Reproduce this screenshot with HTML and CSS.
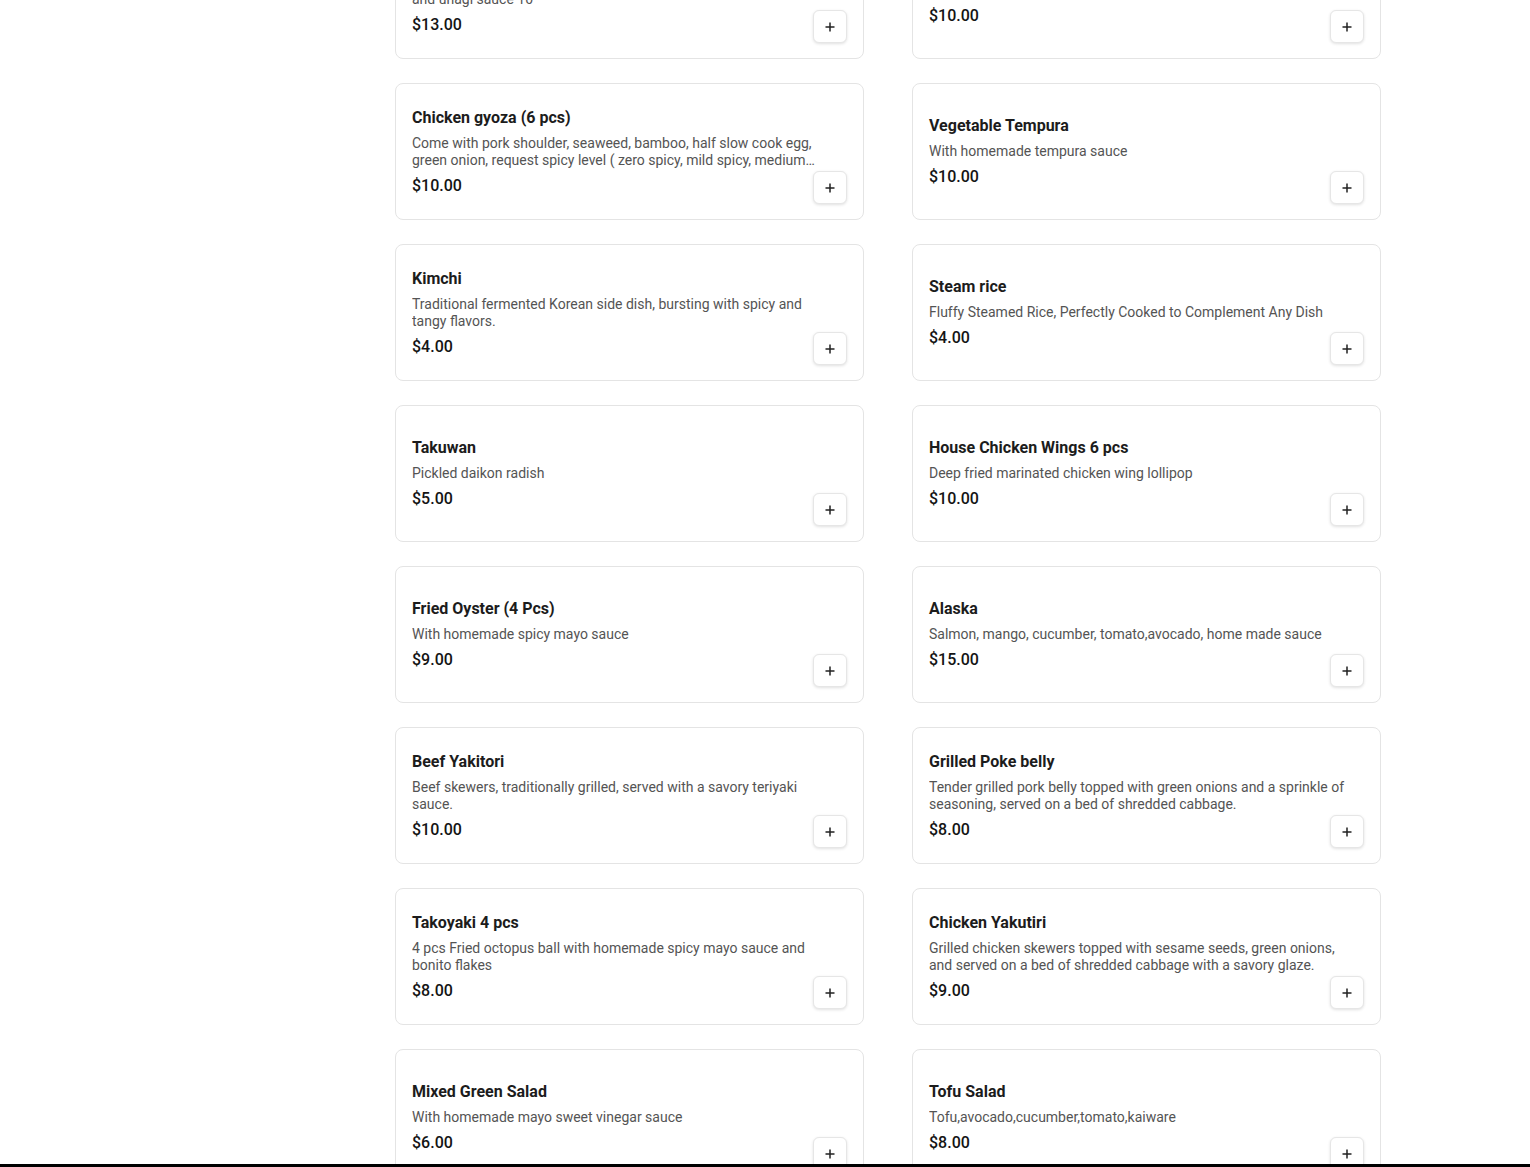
FILE: index.html
```html
<!DOCTYPE html>
<html lang="en">
<head>
<meta charset="utf-8">
<title>Menu</title>
<link rel="stylesheet" href="styles.css">
</head>
<body>
<main class="page">
  <section class="menu">
    <article class="card">
      <div class="info">
        <h3 class="title">Dragon Roll</h3>
        <p class="desc">Shrimp tempura, cucumber, topped with eel, avocado<br>and unagi sauce 10</p>
        <p class="price">$13.00</p>
      </div>
      <button class="add" aria-label="Add"><svg viewBox="0 0 12 12" width="12" height="12"><path d="M6 1.5v9M1.5 6h9"/></svg></button>
    </article>
    <article class="card">
      <div class="info">
        <h3 class="title">Pork gyoza (6 pcs)</h3>
        <p class="desc">Pan fried pork dumplings</p>
        <p class="price">$10.00</p>
      </div>
      <button class="add" aria-label="Add"><svg viewBox="0 0 12 12" width="12" height="12"><path d="M6 1.5v9M1.5 6h9"/></svg></button>
    </article>

    <article class="card">
      <div class="info">
        <h3 class="title">Chicken gyoza (6 pcs)</h3>
        <p class="desc">Come with pork shoulder, seaweed, bamboo, half slow cook egg, green onion, request spicy level ( zero spicy, mild spicy, medium spicy, extra spicy )</p>
        <p class="price">$10.00</p>
      </div>
      <button class="add" aria-label="Add"><svg viewBox="0 0 12 12" width="12" height="12"><path d="M6 1.5v9M1.5 6h9"/></svg></button>
    </article>
    <article class="card">
      <div class="info">
        <h3 class="title">Vegetable Tempura</h3>
        <p class="desc">With homemade tempura sauce</p>
        <p class="price">$10.00</p>
      </div>
      <button class="add" aria-label="Add"><svg viewBox="0 0 12 12" width="12" height="12"><path d="M6 1.5v9M1.5 6h9"/></svg></button>
    </article>

    <article class="card">
      <div class="info">
        <h3 class="title">Kimchi</h3>
        <p class="desc">Traditional fermented Korean side dish, bursting with spicy and tangy flavors.</p>
        <p class="price">$4.00</p>
      </div>
      <button class="add" aria-label="Add"><svg viewBox="0 0 12 12" width="12" height="12"><path d="M6 1.5v9M1.5 6h9"/></svg></button>
    </article>
    <article class="card">
      <div class="info">
        <h3 class="title">Steam rice</h3>
        <p class="desc">Fluffy Steamed Rice, Perfectly Cooked to Complement Any Dish</p>
        <p class="price">$4.00</p>
      </div>
      <button class="add" aria-label="Add"><svg viewBox="0 0 12 12" width="12" height="12"><path d="M6 1.5v9M1.5 6h9"/></svg></button>
    </article>

    <article class="card">
      <div class="info">
        <h3 class="title">Takuwan</h3>
        <p class="desc">Pickled daikon radish</p>
        <p class="price">$5.00</p>
      </div>
      <button class="add" aria-label="Add"><svg viewBox="0 0 12 12" width="12" height="12"><path d="M6 1.5v9M1.5 6h9"/></svg></button>
    </article>
    <article class="card">
      <div class="info">
        <h3 class="title">House Chicken Wings 6 pcs</h3>
        <p class="desc">Deep fried marinated chicken wing lollipop</p>
        <p class="price">$10.00</p>
      </div>
      <button class="add" aria-label="Add"><svg viewBox="0 0 12 12" width="12" height="12"><path d="M6 1.5v9M1.5 6h9"/></svg></button>
    </article>

    <article class="card">
      <div class="info">
        <h3 class="title">Fried Oyster (4 Pcs)</h3>
        <p class="desc">With homemade spicy mayo sauce</p>
        <p class="price">$9.00</p>
      </div>
      <button class="add" aria-label="Add"><svg viewBox="0 0 12 12" width="12" height="12"><path d="M6 1.5v9M1.5 6h9"/></svg></button>
    </article>
    <article class="card">
      <div class="info">
        <h3 class="title">Alaska</h3>
        <p class="desc">Salmon, mango, cucumber, tomato,avocado, home made sauce</p>
        <p class="price">$15.00</p>
      </div>
      <button class="add" aria-label="Add"><svg viewBox="0 0 12 12" width="12" height="12"><path d="M6 1.5v9M1.5 6h9"/></svg></button>
    </article>

    <article class="card">
      <div class="info">
        <h3 class="title">Beef Yakitori</h3>
        <p class="desc">Beef skewers, traditionally grilled, served with a savory teriyaki sauce.</p>
        <p class="price">$10.00</p>
      </div>
      <button class="add" aria-label="Add"><svg viewBox="0 0 12 12" width="12" height="12"><path d="M6 1.5v9M1.5 6h9"/></svg></button>
    </article>
    <article class="card">
      <div class="info">
        <h3 class="title">Grilled Poke belly</h3>
        <p class="desc">Tender grilled pork belly topped with green onions and a sprinkle of seasoning, served on a bed of shredded cabbage.</p>
        <p class="price">$8.00</p>
      </div>
      <button class="add" aria-label="Add"><svg viewBox="0 0 12 12" width="12" height="12"><path d="M6 1.5v9M1.5 6h9"/></svg></button>
    </article>

    <article class="card">
      <div class="info">
        <h3 class="title">Takoyaki 4 pcs</h3>
        <p class="desc">4 pcs Fried octopus ball with homemade spicy mayo sauce and bonito flakes</p>
        <p class="price">$8.00</p>
      </div>
      <button class="add" aria-label="Add"><svg viewBox="0 0 12 12" width="12" height="12"><path d="M6 1.5v9M1.5 6h9"/></svg></button>
    </article>
    <article class="card">
      <div class="info">
        <h3 class="title">Chicken Yakutiri</h3>
        <p class="desc">Grilled chicken skewers topped with sesame seeds, green onions, and served on a bed of shredded cabbage with a savory glaze.</p>
        <p class="price">$9.00</p>
      </div>
      <button class="add" aria-label="Add"><svg viewBox="0 0 12 12" width="12" height="12"><path d="M6 1.5v9M1.5 6h9"/></svg></button>
    </article>

    <article class="card">
      <div class="info">
        <h3 class="title">Mixed Green Salad</h3>
        <p class="desc">With homemade mayo sweet vinegar sauce</p>
        <p class="price">$6.00</p>
      </div>
      <button class="add" aria-label="Add"><svg viewBox="0 0 12 12" width="12" height="12"><path d="M6 1.5v9M1.5 6h9"/></svg></button>
    </article>
    <article class="card">
      <div class="info">
        <h3 class="title">Tofu Salad</h3>
        <p class="desc">Tofu,avocado,cucumber,tomato,kaiware</p>
        <p class="price">$8.00</p>
      </div>
      <button class="add" aria-label="Add"><svg viewBox="0 0 12 12" width="12" height="12"><path d="M6 1.5v9M1.5 6h9"/></svg></button>
    </article>
  </section>
</main>
<div class="bottom-bar"></div>
</body>
</html>
```

FILE: styles.css
```css
* { box-sizing: border-box; }

html, body {
  margin: 0;
  padding: 0;
  background: #ffffff;
}

body {
  font-family: Roboto, "Liberation Sans", Arial, sans-serif;
  color: #1a1a1a;
  overflow: hidden;
  height: 1167px;
}

.page {
  padding-left: 395px;
}

.menu {
  display: grid;
  grid-template-columns: 469px 469px;
  column-gap: 48px;
  row-gap: 24px;
  margin-top: -78px;
}

.card {
  position: relative;
  height: 137px;
  border: 1px solid #e4e4e4;
  border-radius: 8px;
  background: #fff;
  padding: 0 16px;
  display: flex;
  align-items: center;
}

.info {
  width: 421px;
}

.title {
  margin: 0;
  font-size: 16px;
  line-height: 24px;
  font-weight: 700;
  color: #1c1c1c;
}

.desc {
  margin: 5px 0 0;
  font-size: 14px;
  line-height: 17px;
  color: #545454;
  display: -webkit-box;
  -webkit-line-clamp: 2;
  -webkit-box-orient: vertical;
  overflow: hidden;
}

.price {
  margin: 5px 0 0;
  font-size: 16px;
  line-height: 24px;
  font-weight: 500;
  color: #141414;
}

.add {
  position: absolute;
  right: 16px;
  bottom: 15px;
  width: 34px;
  height: 33px;
  padding: 0;
  border: 1px solid #e6e6e6;
  border-radius: 6px;
  background: #fff;
  box-shadow: 0 1px 3px rgba(0, 0, 0, 0.12);
  display: flex;
  align-items: center;
  justify-content: center;
  cursor: pointer;
}

.add svg path {
  fill: none;
  stroke: #222;
  stroke-width: 1.5;
}

.bottom-bar {
  position: fixed;
  left: 0;
  right: 0;
  bottom: 0;
  height: 3px;
  background: #000;
}
```
